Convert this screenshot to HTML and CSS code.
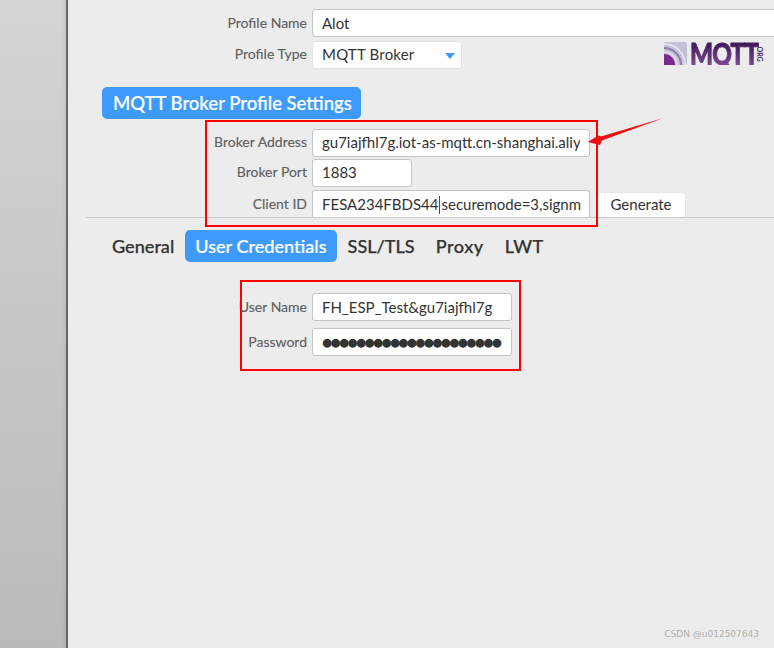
FILE: index.html
```html
<!DOCTYPE html>
<html lang="en">
<head>
  <meta charset="UTF-8"/>
  <title>MQTT Profile</title>
  <link rel="stylesheet" href="styles.css">
</head>
<body>
  <div class="sidebar"></div>
  <div class="main">
    <div class="row row-name">
      <label>Profile Name</label>
      <input class="w-full" type="text" value="Alot">
    </div>
    <div class="row row-type">
      <label>Profile Type</label>
      <div class="select">MQTT Broker<span class="caret"></span></div>
      <div class="logo">
        <svg width="23" height="23" viewBox="0 0 23 23">
          <rect width="23" height="23" rx="2" fill="#c6bfd8"/>
          <path d="M0 2 A21 21 0 0 1 21 23" fill="none" stroke="#e4e0ec" stroke-width="2"/>
          <path d="M0 6 A17 17 0 0 1 17 23" fill="none" stroke="#8f80ad" stroke-width="2"/>
          <path d="M0 10 A13 13 0 0 1 13 23" fill="none" stroke="#e0dbe9" stroke-width="2"/>
          <path d="M0 12 A11 11 0 0 1 11 23 L0 23 Z" fill="#7b2a8c"/>
        </svg>
        <span class="logo-text">MQTT</span>
        <span class="logo-org">.ORG</span>
      </div>
    </div>

    <h2 class="badge">MQTT Broker Profile Settings</h2>

    <div class="row row-addr">
      <label>Broker Address</label>
      <input class="w-long" type="text" value="gu7iajfhl7g.iot-as-mqtt.cn-shanghai.aliy">
    </div>
    <div class="row row-port">
      <label>Broker Port</label>
      <input class="w-short" type="text" value="1883">
    </div>
    <div class="row row-client">
      <label>Client ID</label>
      <div class="input w-long">FESA234FBDS44<span class="cursor"></span>securemode=3,signm</div>
      <button class="generate">Generate</button>
    </div>

    <div class="tabs">
      <span class="tab">General</span>
      <span class="tab active">User Credentials</span>
      <span class="tab">SSL/TLS</span>
      <span class="tab wide">Proxy</span>
      <span class="tab wide">LWT</span>
    </div>

    <div class="row row-user">
      <label>User Name</label>
      <input class="w-cred" type="text" value="FH_ESP_Test&amp;gu7iajfhl7g">
    </div>
    <div class="row row-pass">
      <label>Password</label>
      <div class="input w-cred dots">●●●●●●●●●●●●●●●●●●●●●</div>
    </div>
  </div>

  <!-- annotations on top of the screenshot -->
  <div class="mark mark-broker"></div>
  <div class="mark mark-cred"></div>
  <svg class="arrow" width="80" height="30" viewBox="0 0 80 30">
    <path d="M76.5 1 L14 19.5 L11.5 18.5 L0.5 25 L13 28 L15 23.5 Z" fill="#f00f0f"/>
  </svg>
  <div class="watermark">CSDN @u012507643</div>
</body>
</html>
```

FILE: styles.css
```css
html, body { height:100%; }
body { margin:0; display:flex; height:648px; overflow:hidden; font-family:"Lato", sans-serif; background:#ececec; color:#333; }
.sidebar { width:66px; flex:none; background:linear-gradient(#d4d4d4, #bababa); border-right:2px solid #666; box-shadow:inset -4px 0 4px -3px rgba(0,0,0,0.08); }
.main { flex:1; min-width:0; padding-top:9px; }

.row { display:flex; align-items:center; gap:5px; }
.row label { width:239px; flex:none; text-align:right; font-size:14px; color:#5f5f5f; white-space:nowrap; margin-top:-3px; -webkit-text-stroke:0.15px #5f5f5f; }
.row-name label { margin-top:-1px; }
.row-user label { margin-top:-1px; }
.row-pass label { margin-top:-1px; }
.row-type { margin-top:4px; position:relative; }
.row-addr { margin-top:10px; }
.row-port { margin-top:2px; }
.row-client { margin-top:3px; }
.row-user { margin-top:31px; }
.row-pass { margin-top:7px; }

input, .input, .select { box-sizing:border-box; height:28px; flex:none; background:#fff; border:1px solid #c4c4c4; border-radius:3px; padding:0 9px; font-family:"Lato", sans-serif; font-size:15px; color:#333; line-height:26px; white-space:nowrap; overflow:hidden; outline:none; margin:0; }
.row-addr input, .row-port input { padding-bottom:2px; }
.w-full { width:479px; }
.w-long { width:278px; }
.w-short { width:100px; }
.w-cred { width:200px; }

.select { position:relative; width:150px; border-color:#e2e2e2; letter-spacing:0.2px; line-height:24px; }
.caret { position:absolute; right:6px; top:11px; border:5px solid transparent; border-top:6px solid #3e9bfc; border-bottom:0; }

.logo { position:absolute; left:596px; top:1px; display:flex; align-items:center; height:23px; }
.logo-text { display:block; width:100px; margin:0 -33px 0 3px; font-size:31px; line-height:23px; font-weight:900; letter-spacing:-1px; transform:scaleX(0.78); transform-origin:left center; color:transparent; -webkit-text-stroke:1px transparent; background:linear-gradient(#3d1558, #7a4a90); -webkit-background-clip:text; background-clip:text; }
.logo-org { font-size:7px; font-weight:700; color:#4a2266; writing-mode:vertical-rl; line-height:6px; }

.badge { display:block; width:fit-content; margin:18px 0 0 34px; padding:0 9px 0 11px; height:32px; line-height:32px; background:#3e9bfc; color:#fff; font-size:18.5px; font-weight:500; border-radius:5px; -webkit-text-stroke:0.2px #fff; }

.cursor { display:inline-block; width:1px; height:18px; background:#7b2a8c; vertical-align:-4px; margin:0 1px; }

.row-client { align-items:flex-start; height:27px; }
.row-client label { line-height:27px; margin-top:0; }
.row-client .input { height:27px; border-bottom:0; border-radius:3px 3px 0 0; }
.generate { box-sizing:border-box; width:89px; height:25px; margin:2px 0 0 2px; background:#fff; border:1px solid #e6e6e6; border-bottom:0; border-radius:4px 4px 0 0; font-family:"Lato", sans-serif; font-size:15px; color:#333; padding:0 1px 2px 0; }

.tabs { display:flex; align-items:center; gap:1px; height:32px; margin:13px 0 0 34px; position:relative; }
.tabs::before { content:""; position:absolute; left:-16px; right:0; top:-13px; height:1px; background:#c8c8c8; }
.tab { padding:0 10px; height:32px; line-height:32px; font-size:18.1px; font-weight:500; color:#333; -webkit-text-stroke:0.25px #333; }
.tab.active { background:#3e9bfc; color:#fff; border-radius:5px; -webkit-text-stroke:0.2px #fff; }
.tab.wide { letter-spacing:0.5px; }

.dots { font-size:11.5px; letter-spacing:-1.55px; font-family:"DejaVu Sans", sans-serif; }

.mark { position:absolute; border:2px solid #f00; box-sizing:border-box; }
.mark-broker { left:205px; top:120px; width:393px; height:107px; }
.mark-cred { left:240px; top:280px; width:281px; height:91px; }
.arrow { position:absolute; left:587px; top:117px; }
.watermark { position:absolute; right:15px; top:629px; font-size:9px; color:#b0b0b0; font-family:"DejaVu Sans", sans-serif; }
```
